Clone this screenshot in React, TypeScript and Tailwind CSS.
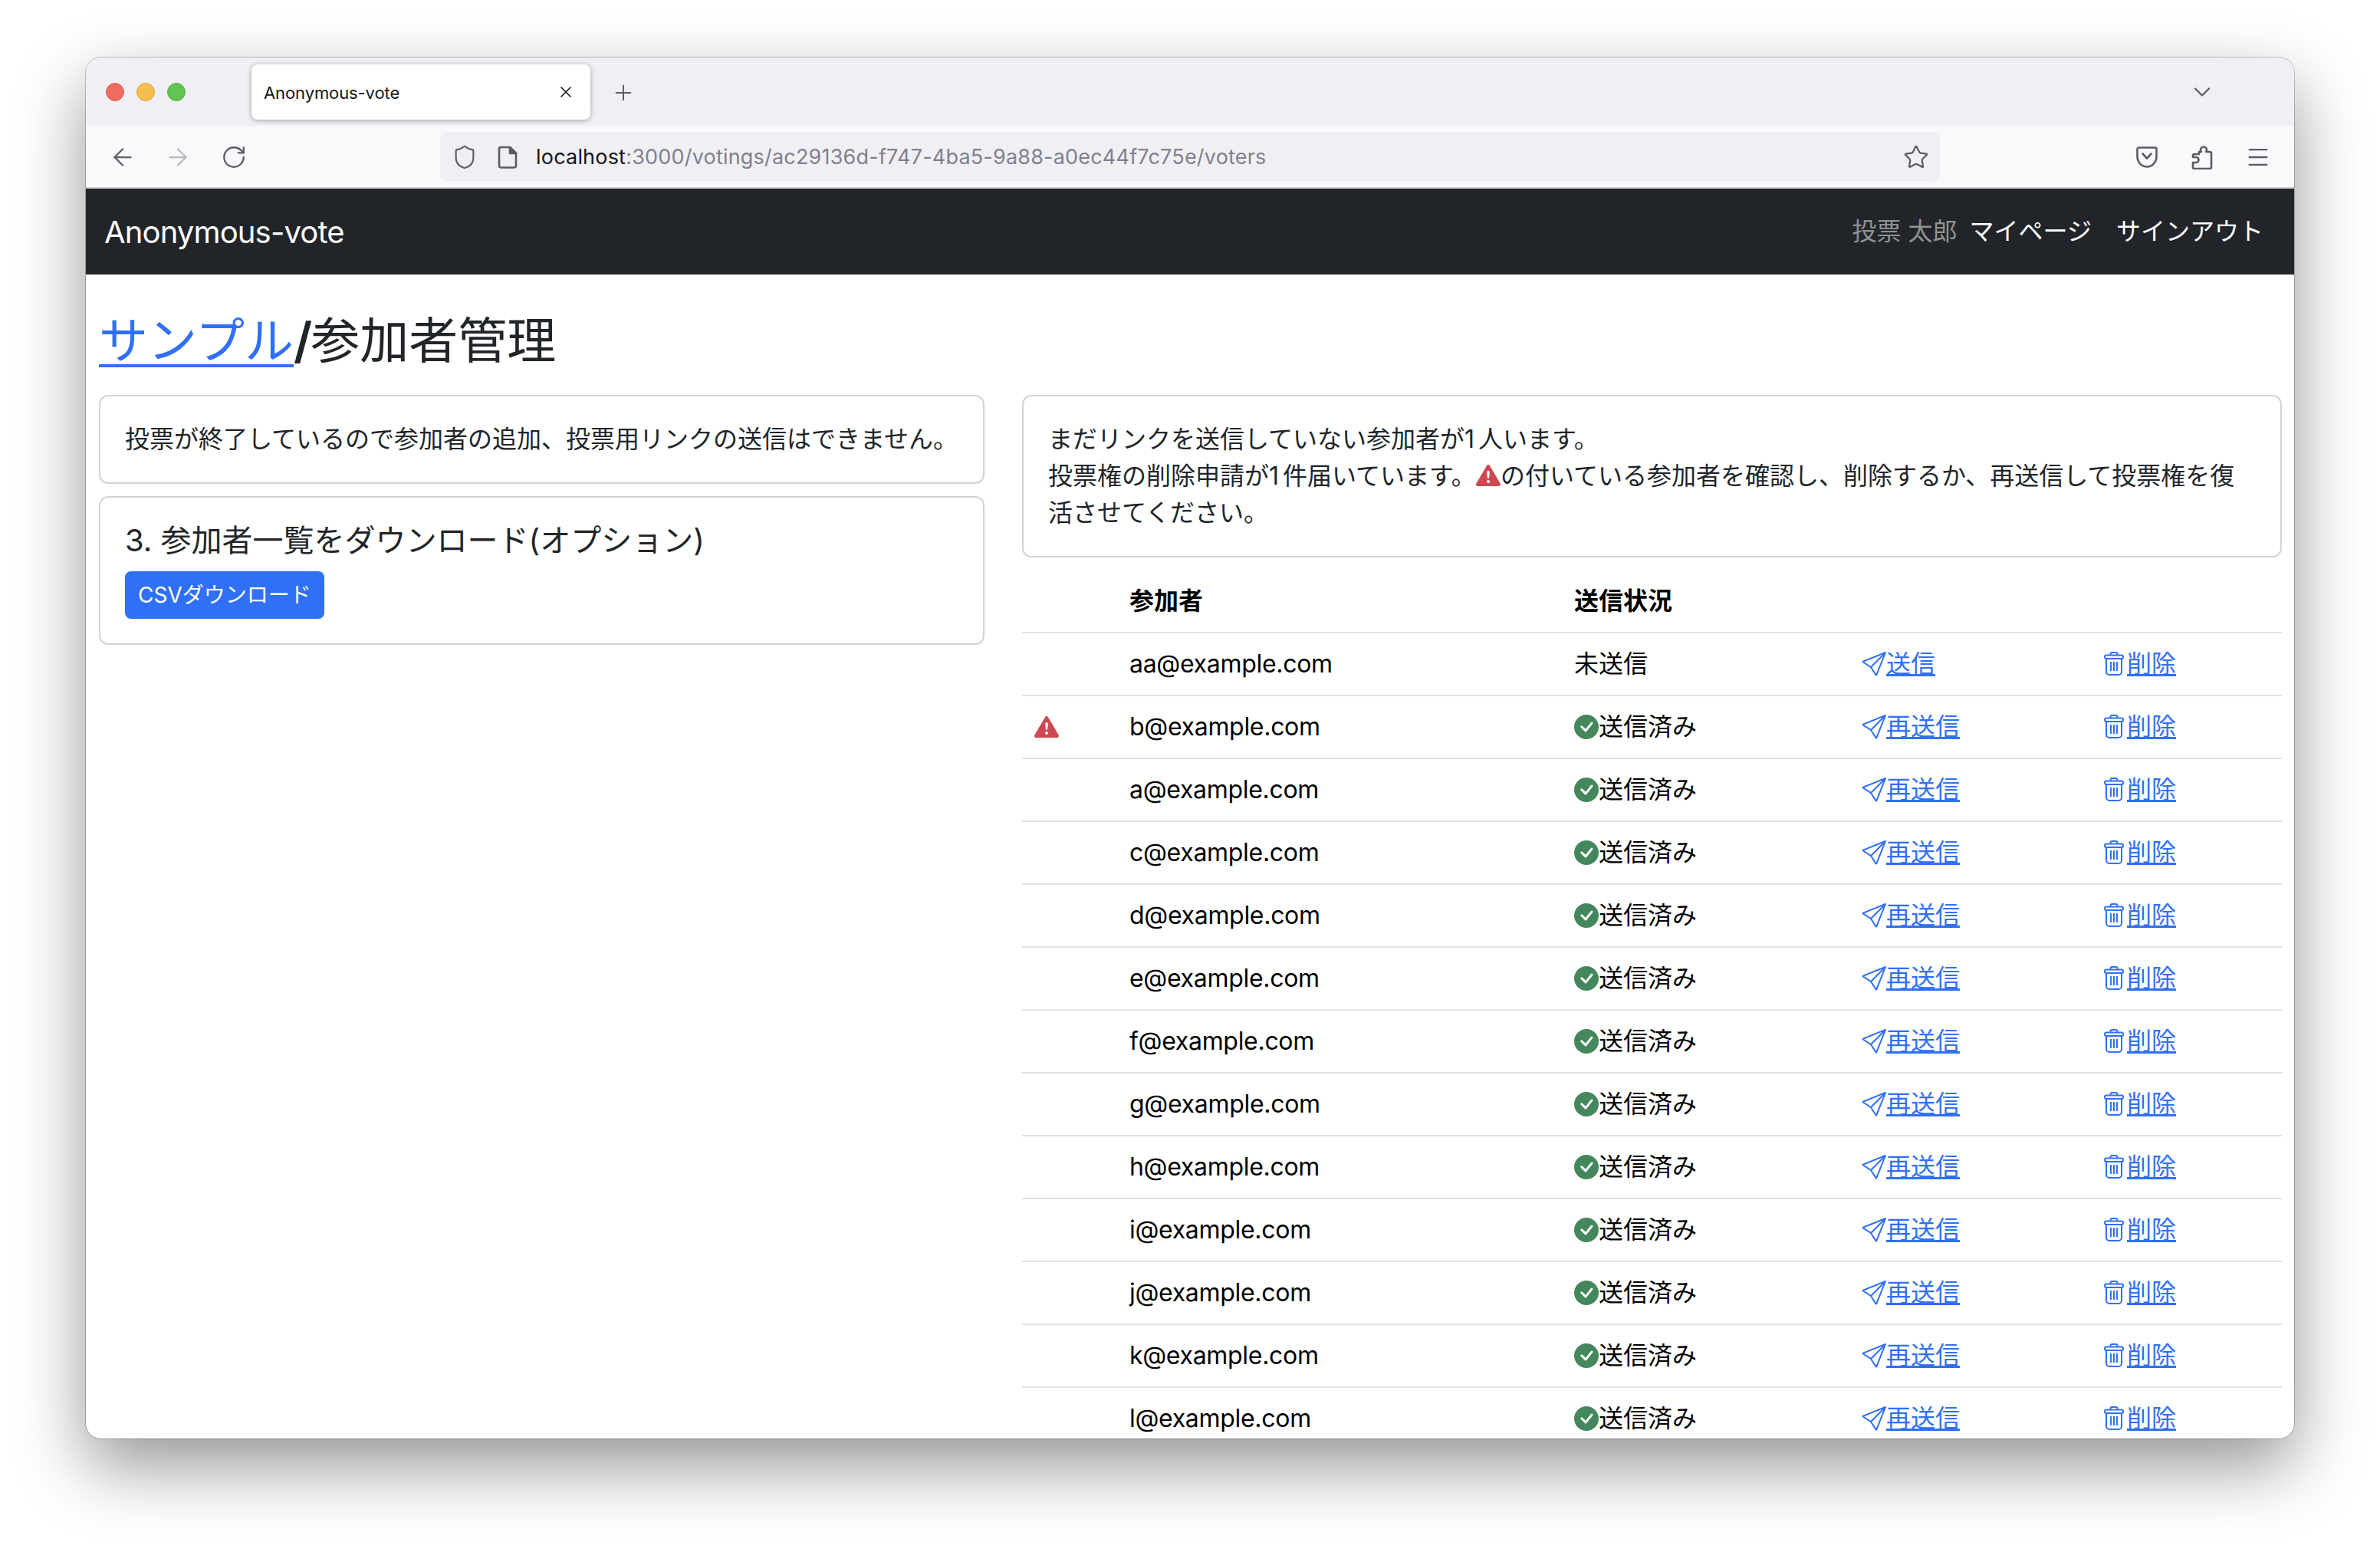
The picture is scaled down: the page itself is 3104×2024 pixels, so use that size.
import { ArrowLeft, ArrowRight, ChevronDown, Menu, Plus, RotateCw, Shield, Star, X } from "lucide-react";
import { BsCheckCircleFill, BsExclamationTriangleFill, BsSend } from "react-icons/bs";

const VOTERS = [
  "aa@example.com",
  "b@example.com",
  "a@example.com",
  "c@example.com",
  "d@example.com",
  "e@example.com",
  "f@example.com",
  "g@example.com",
  "h@example.com",
  "i@example.com",
  "j@example.com",
  "k@example.com",
  "l@example.com"
];

function PageIcon() {
  return (
    <svg width="26" height="30" viewBox="0 0 26 30" fill="none" stroke="#5b5b66" strokeWidth="2.6" strokeLinejoin="round">
      <path d="M4 2h12l8 8v16a2.5 2.5 0 0 1-2.5 2.5h-17A2.5 2.5 0 0 1 2 26V4a2 2 0 0 1 2-2z" />
      <path d="M16 2l8 8h-8z" fill="#5b5b66" />
    </svg>
  );
}

function PocketIcon() {
  return (
    <svg width="28" height="28" viewBox="0 0 28 28" fill="none" stroke="#5b5b66" strokeWidth="2.6" strokeLinecap="round" strokeLinejoin="round">
      <path d="M3.5 1.5h21a2 2 0 0 1 2 2V13a12.5 13.5 0 0 1-25 0V3.5a2 2 0 0 1 2-2z" />
      <path d="M8.5 9.5l5.5 6 5.5-6" />
    </svg>
  );
}

function PuzzleIcon() {
  return (
    <svg width="28" height="32" viewBox="0 0 28 32" fill="none" stroke="#5b5b66" strokeWidth="2.6" strokeLinejoin="round">
      <path d="M10 9h3a3 3 0 0 1-1-2.5 4 4 0 0 1 8 0A3 3 0 0 1 19 9h5a2 2 0 0 1 2 2v18a2 2 0 0 1-2 2H4a2 2 0 0 1-2-2v-6h4a3.5 3.5 0 0 0 0-7H2v-2a2 2 0 0 1 2-2h6z" />
    </svg>
  );
}

function TrashIcon() {
  return (
    <svg width="32" height="32" viewBox="0 0 32 32" fill="none" stroke="currentColor" strokeWidth="2" strokeLinejoin="round" className="shrink-0">
      <path d="M10.5 4.5V3a2 2 0 0 1 2-2h5a2 2 0 0 1 2 2v1.5" />
      <rect x="3" y="4.5" width="24" height="4.5" rx="2" />
      <path d="M5 9v17a4 4 0 0 0 4 4h12a4 4 0 0 0 4-4V9" />
      <path d="M11 13v12M15 13v12M19 13v12" />
    </svg>
  );
}

function WindowChrome() {
  return (
    <>
      {/* tab strip */}
      <div className="flex h-[89px] items-center bg-[#f0f0f4]">
        <div className="ml-[26px] flex gap-[16px]">
          <span className="h-[24px] w-[24px] rounded-full border border-[#e0584e] bg-[#ef6b60]" />
          <span className="h-[24px] w-[24px] rounded-full border border-[#dda63a] bg-[#f5bf4f]" />
          <span className="h-[24px] w-[24px] rounded-full border border-[#4fae42] bg-[#61c554]" />
        </div>
        <div className="ml-[86px] flex h-[72px] w-[442px] items-center justify-between rounded-[8px] bg-white pl-[16px] pr-[20px] shadow-[0_1px_6px_rgba(0,0,0,0.35)]">
          <span className="pt-[3px] text-[22px] tracking-[-0.1px] text-[#15141a]">Anonymous-vote</span>
          <X size={24} strokeWidth={1.6} className="text-[#15141a]" />
        </div>
        <Plus size={32} strokeWidth={1.5} className="ml-[27px] mt-[2px] text-[#5b5b66]" />
        <ChevronDown size={36} strokeWidth={1.5} className="ml-auto mr-[102px] text-[#5b5b66]" />
      </div>
      {/* toolbar */}
      <div className="flex h-[82px] items-center border-b-2 border-[#cfcfd4] bg-[#f9f9fb] pt-[2px]">
        <ArrowLeft size={36} strokeWidth={1.5} className="ml-[30px] text-[#5b5b66]" />
        <ArrowRight size={36} strokeWidth={1.5} className="ml-[36px] text-[#b7b7bd]" />
        <RotateCw size={34} strokeWidth={1.6} className="ml-[38px] text-[#5b5b66]" />
        <div className="ml-[252px] -mt-[2px] flex h-[64px] w-[1956px] items-center rounded-[8px] bg-[#f0f0f4] pl-[15px] pr-[14px]">
          <Shield size={34} strokeWidth={1.5} className="mt-[2px] text-[#5b5b66]" />
          <span className="ml-[26px] mt-[2px]">
            <PageIcon />
          </span>
          <span className="ml-[24px] mt-[2px] text-[27px] tracking-[0.2px] text-[#15141a]">
            localhost<span className="text-[#80808e]">:3000/votings/ac29136d-f747-4ba5-9a88-a0ec44f7c75e/voters</span>
          </span>
          <Star size={34} strokeWidth={1.6} className="ml-auto mt-[2px] text-[#5b5b66]" />
        </div>
        <div className="ml-[256px] flex items-center gap-[44px]">
          <PocketIcon />
          <PuzzleIcon />
          <Menu size={34} strokeWidth={1.6} className="-ml-[2px] text-[#5b5b66]" />
        </div>
      </div>
    </>
  );
}

function Navbar() {
  return (
    <nav className="flex h-[112px] items-center justify-between bg-[#212529] pl-[24px] pr-[40px]">
      <span className="pt-[2px] text-[40px] tracking-[-0.85px] text-white">Anonymous-vote</span>
      <div className="flex items-center text-[32px]">
        <span className="text-white/50">投票 太郎</span>
        <span className="ml-[16px] text-white">マイページ</span>
        <span className="ml-[32px] text-white">サインアウト</span>
      </div>
    </nav>
  );
}

function VoterRow({ email, index }: { email: string; index: number }) {
  const sent = index > 0;
  return (
    <tr className="h-[82px] border-b-2 border-[#dee2e6] text-[32px] text-black">
      <td className="px-[16px]">
        {index === 1 && <BsExclamationTriangleFill size={32} className="text-[#cf4751]" />}
      </td>
      <td className="px-[16px] tracking-[-0.3px]">{email}</td>
      <td className="px-[16px]">
        {sent ? (
          <span className="flex items-center">
            <BsCheckCircleFill size={32} className="text-[#44875c]" />
            送信済み
          </span>
        ) : (
          "未送信"
        )}
      </td>
      <td className="px-[16px]">
        <span className="flex items-center text-[#3070f6]">
          <BsSend size={32} />
          <a className="underline">{sent ? "再送信" : "送信"}</a>
        </span>
      </td>
      <td className="px-[16px]">
        <span className="flex items-center text-[#3070f6]">
          <TrashIcon />
          <a className="underline">削除</a>
        </span>
      </td>
    </tr>
  );
}

export default function App() {
  return (
    <div
      className="h-[2024px] w-[3104px] overflow-hidden bg-white pl-[112px] pt-[75px]"
      style={{ fontFamily: 'Inter, "Noto Sans CJK JP", sans-serif' }}
    >
      <div className="h-[1801px] w-[2880px] overflow-hidden rounded-[20px] bg-white shadow-[0_36px_90px_rgba(0,0,0,0.42),0_0_0_1px_rgba(0,0,0,0.22)]">
        <WindowChrome />
        <Navbar />

        <main className="px-[17px] text-[#212529]">
          <h2 className="pb-[32px] pt-[47px] text-[64px] leading-[78px]">
            <a className="text-[#3070f6] underline decoration-[4px] underline-offset-[8px]">サンプル</a>
            <span className="font-semibold tracking-[-2px]">/</span>
            <span>参加者管理</span>
          </h2>

          <div className="flex items-start gap-[49px]">
            <div className="w-[1155px] shrink-0">
              <div className="mb-[16px] rounded-[12px] border-2 border-[#d3d3d3] p-[32px] text-[32px] leading-[48px]">
                投票が終了しているので参加者の追加、投票用リンクの送信はできません。
              </div>
              <div className="rounded-[12px] border-2 border-[#d3d3d3] p-[32px]">
                <h5 className="mb-[16px] text-[40px] leading-[48px]">3. 参加者一覧をダウンロード(オプション)</h5>
                <button className="h-[62px] rounded-[8px] bg-[#3070f6] px-[17px] text-[28px] text-white">
                  CSVダウンロード
                </button>
              </div>
            </div>

            <div className="w-[1643px] shrink-0">
              <div className="mb-[16px] rounded-[12px] border-2 border-[#d3d3d3] p-[32px] text-[32px] leading-[48px]">
                まだリンクを送信していない参加者が<span className="tracking-[5px]">1</span>人います。
                <br />
                投票権の削除申請が<span className="tracking-[5px]">1</span>件届いています。
                <BsExclamationTriangleFill size={32} className="inline align-[-4px] text-[#cf4751]" />
                の付いている参加者を確認し、削除するか、再送信して投票権を復
                <br />
                活させてください。
              </div>
              <table className="w-full table-fixed">
                <colgroup>
                  <col className="w-[124px]" />
                  <col className="w-[580px]" />
                  <col className="w-[375px]" />
                  <col className="w-[314px]" />
                  <col className="w-[250px]" />
                </colgroup>
                <thead>
                  <tr className="h-[82px] border-b-2 border-[#dee2e6] text-left text-[32px] text-black">
                    <th />
                    <th className="px-[16px] font-bold">参加者</th>
                    <th className="px-[16px] font-bold">送信状況</th>
                    <th />
                    <th />
                  </tr>
                </thead>
                <tbody>
                  {VOTERS.map((email, index) => (
                    <VoterRow key={email} email={email} index={index} />
                  ))}
                </tbody>
              </table>
            </div>
          </div>
        </main>
      </div>
    </div>
  );
}
